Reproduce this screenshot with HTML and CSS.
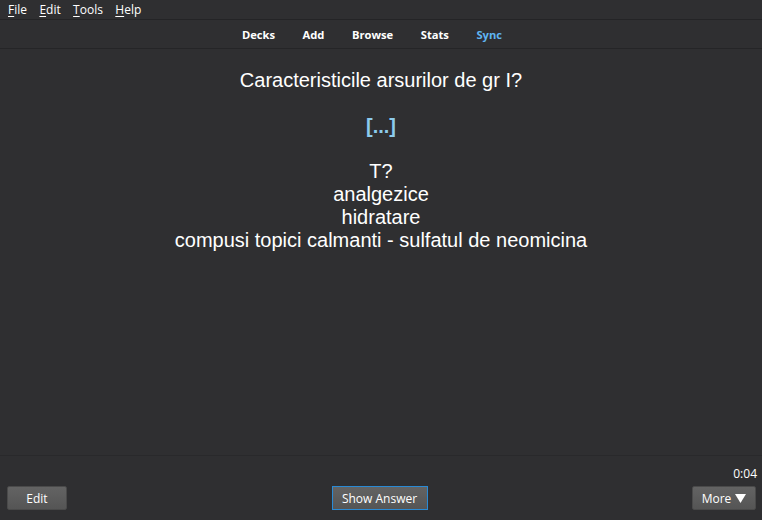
FILE: index.html
```html
<!DOCTYPE html>
<html lang="en">
<head>
<meta charset="utf-8"/>
<title>Anki</title>
<link rel="stylesheet" href="styles.css">
</head>
<body>
<div class="menubar">
  <span class="menu"><u>F</u>ile</span>
  <span class="menu"><u>E</u>dit</span>
  <span class="menu"><u>T</u>ools</span>
  <span class="menu"><u>H</u>elp</span>
</div>
<div class="toolbar">
  <span class="tab">Decks</span>
  <span class="tab">Add</span>
  <span class="tab">Browse</span>
  <span class="tab">Stats</span>
  <span class="tab sync">Sync</span>
</div>
<div class="card">
  <div class="front">Caracteristicile arsurilor de gr I?</div>
  <div class="cloze">[...]</div>
  <div class="back">T?<br>analgezice<br>hidratare<br>compusi topici calmanti - sulfatul de neomicina</div>
</div>
<div class="bottom">
  <div class="timer">0:04</div>
  <div class="buttons">
    <button class="btn edit">Edit</button>
    <button class="btn answer">Show Answer</button>
    <button class="btn more">More <svg class="arrow" width="11" height="9" viewBox="0 0 11 9"><path d="M0 0H11L5.5 9Z" fill="#fff"/></svg></button>
  </div>
</div>
</body>
</html>
```

FILE: styles.css
```css
html, body { margin: 0; height: 100%; }
body {
  background: #2f2f31;
  color: #fff;
  font-family: "Open Sans", "Noto Sans", sans-serif;
  display: flex;
  flex-direction: column;
  width: 762px;
  height: 520px;
  overflow: hidden;
}
.menubar {
  height: 19px;
  border-bottom: 1px solid #242426;
  display: flex;
  align-items: center;
  padding-left: 8px;
  gap: 12.4px;
  font-size: 12px;
}
.menu u { text-decoration-thickness: 1px; text-underline-offset: 2px; }
.toolbar {
  height: 28px;
  border-bottom: 1px solid #252527;
  display: flex;
  justify-content: center;
  align-items: center;
  gap: 27.5px;
  font-size: 11.2px;
  font-weight: bold;
  padding-right: 18px;
}
.sync { color: #5fb4f2; }
.card {
  flex: 1;
  text-align: center;
  font-family: "Liberation Sans", Arial, sans-serif;
  font-size: 20px;
  line-height: 23px;
  padding-top: 20px;
}
.card .front { margin-bottom: 23px; }
.cloze { color: #8ccbec; font-weight: bold; margin-bottom: 22px; }
.bottom {
  border-top: 1px solid #29292b;
  height: 64px;
  display: flex;
  flex-direction: column;
}
.timer {
  text-align: right;
  font-size: 12px;
  padding: 9px 5px 0 0;
  height: 21px;
}
.buttons {
  display: flex;
  justify-content: space-between;
  align-items: center;
  padding: 0 6px 0 7px;
}
.btn {
  font-family: "Open Sans", "Noto Sans", sans-serif;
  font-size: 12px;
  color: #fff;
  height: 24px;
  background: linear-gradient(#636363, #555555);
  border: 1px solid #4a4a4a;
  border-radius: 2px;
  padding: 0;
}
.edit { width: 60px; }
.answer { width: 96px; border: 1px solid #2a8ad4; border-radius: 0; }
.more { width: 64px; display: flex; align-items: center; justify-content: center; gap: 4px; }
.arrow { margin-top: 1px; }
```
